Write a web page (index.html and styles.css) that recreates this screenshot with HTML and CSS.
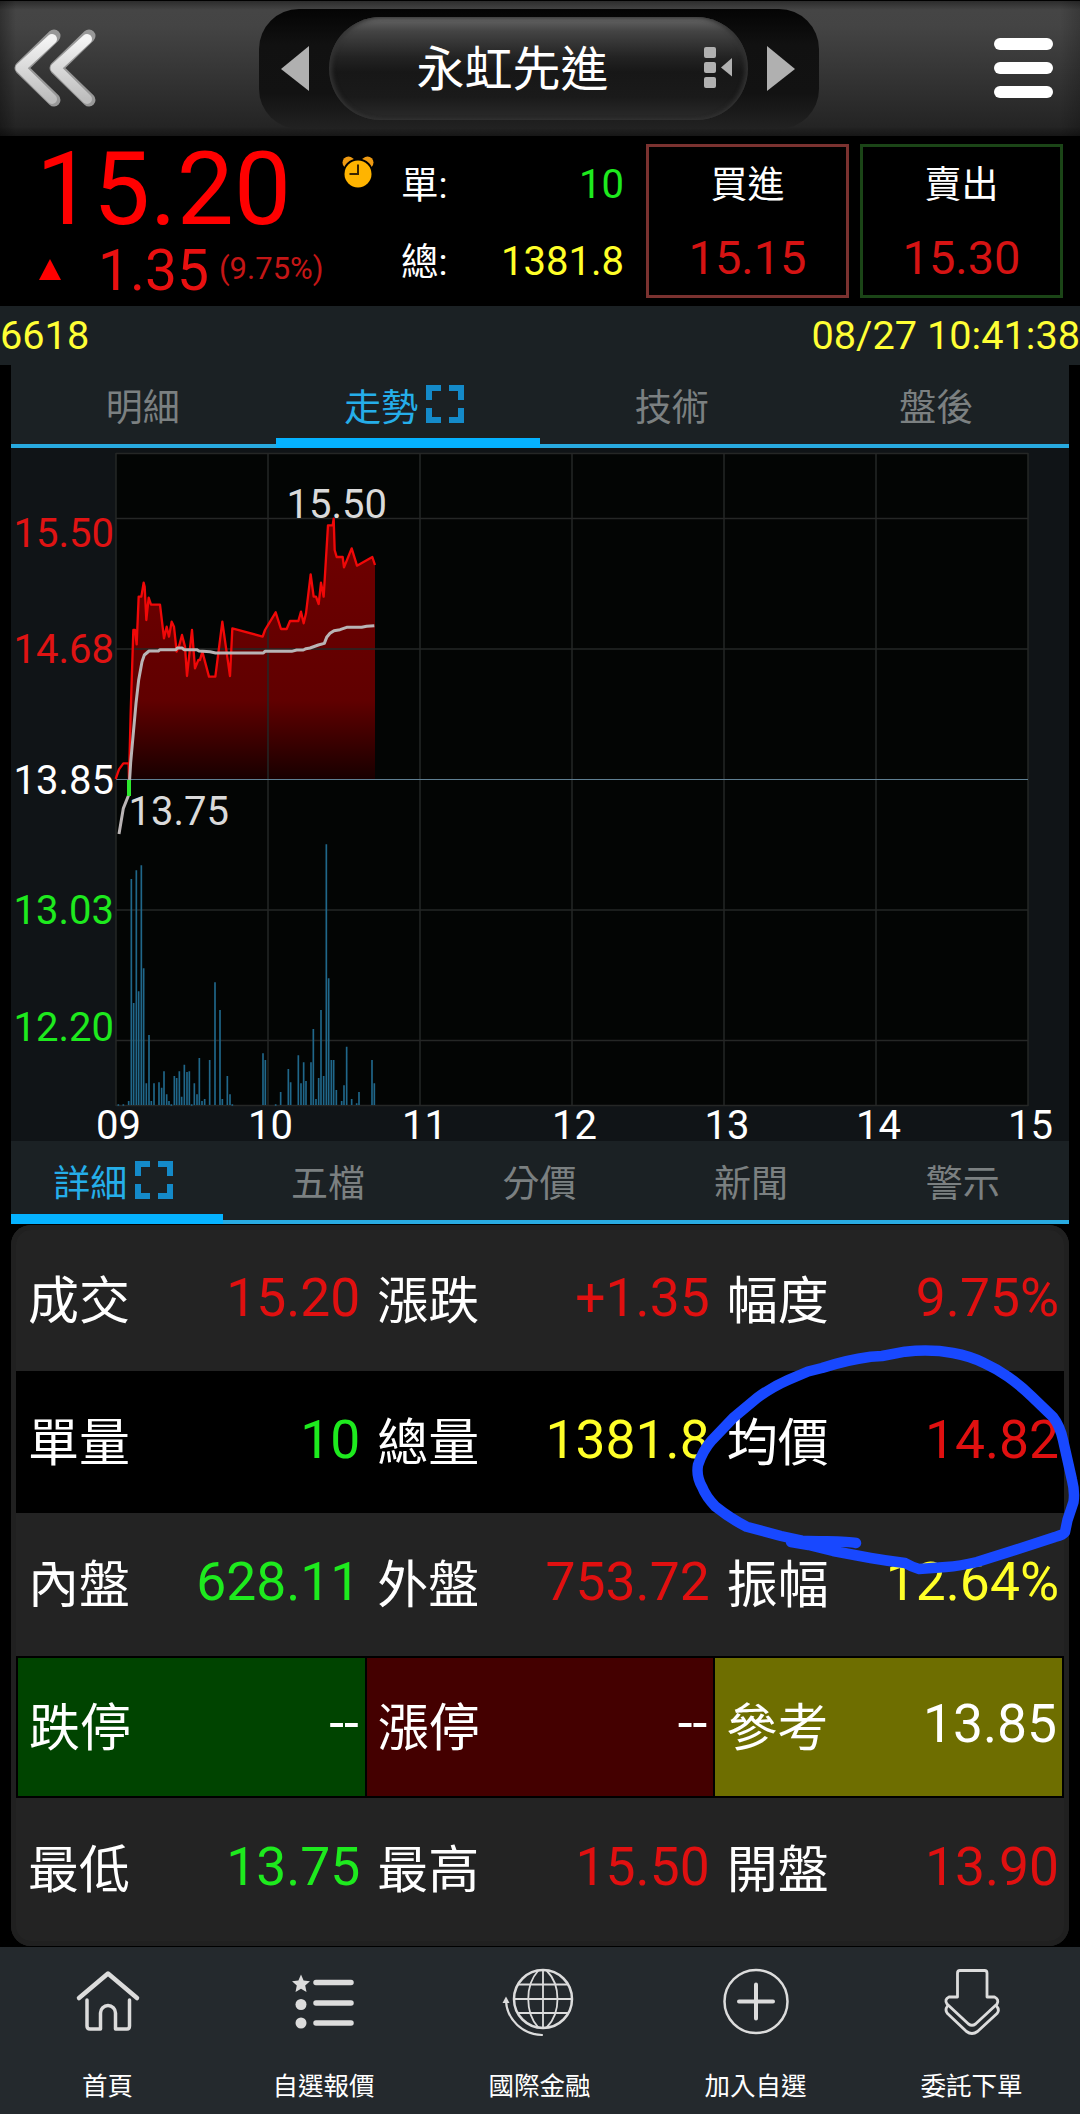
FILE: index.html
```html
<!DOCTYPE html>
<html lang="zh-Hant">
<head>
<meta charset="utf-8">
<title>永虹先進 6618</title>
<link rel="stylesheet" href="styles.css">
</head>
<body>
<div class="app">
  <header class="topbar">
    <svg class="back" width="96" height="90" viewBox="0 0 96 90">
      <defs><linearGradient id="chev" x1="0" y1="0" x2="0" y2="1"><stop offset="0" stop-color="#f4f4f4"/><stop offset="1" stop-color="#bdbdbd"/></linearGradient></defs>
      <g fill="none" stroke-linecap="round" stroke-linejoin="round">
        <path d="M54 14 21 46 54 78M89 14 56 46 89 78" stroke="#989898" stroke-width="13"/>
        <path d="M52 17 20.500 46 52 77M87 17 55.500 46 87 77" stroke="url(#chev)" stroke-width="10"/>
      </g>
    </svg>
    <div class="switcher">
      <svg width="30" height="46" viewBox="0 0 30 46"><path d="M1 23 29 0V45Z" fill="#b0b0b0"/></svg>
      <div class="symbol">
        <span class="symbol-name">永虹先進</span>
        <svg class="symbol-list" width="30" height="42" viewBox="0 0 30 42" fill="#b0b0b0"><rect width="12" height="11" rx="2"/><rect y="15" width="12" height="11" rx="2"/><rect y="30" width="12" height="11" rx="2"/><path d="M17 20.500 28 11V29.500Z"/></svg>
      </div>
      <svg width="30" height="46" viewBox="0 0 30 46"><path d="M29 23 1 0V45Z" fill="#b0b0b0"/></svg>
    </div>
    <div class="menu"><i></i><i></i><i></i></div>
  </header>

  <section class="quote">
    <div class="price">
      <div class="last">15.20</div>
      <div class="change">
        <svg width="22" height="21" viewBox="0 0 22 21"><path d="M11 0 22 21H0Z" fill="#f00"/></svg>
        <span class="diff">1.35</span><span class="pct">(9.75%)</span>
      </div>
    </div>
    <svg class="alarm" width="32" height="33" viewBox="0 0 32 33">
      <circle cx="6.500" cy="6.500" r="6" fill="#ee9a12"/><circle cx="25.500" cy="6.500" r="6" fill="#ee9a12"/>
      <circle cx="16" cy="18" r="15.500" fill="#000"/><circle cx="16" cy="18" r="13.500" fill="#ffb400"/>
      <path d="M16 8.500V18H7.500" fill="none" stroke="#3a2400" stroke-width="2"/>
    </svg>
    <div class="volumes">
      <div><span>單:</span><b class="green">10</b></div>
      <div><span>總:</span><b class="yellow">1381.8</b></div>
    </div>
    <div class="box buy"><span>買進</span><b>15.15</b></div>
    <div class="box sell"><span>賣出</span><b>15.30</b></div>
  </section>

  <div class="stamp"><span>6618</span><span>08/27 10:41:38</span></div>

  <main class="content">
    <nav class="tabs four">
      <div class="tab">明細</div>
      <div class="tab active">走勢<svg class="expand" width="38" height="38" viewBox="0 0 38 38"><path d="M3 15V3H15M23 3H35V15M35 23V35H23M15 35H3V23"/></svg></div>
      <div class="tab">技術</div>
      <div class="tab">盤後</div>
    </nav>

    <svg class="chart" width="1058" height="693" viewBox="11 448 1058 693">
      <defs><linearGradient id="area" gradientUnits="userSpaceOnUse" x1="0" y1="116" x2="0" y2="897">
        <stop offset="0" stop-color="#700000"/><stop offset=".7" stop-color="#600000"/><stop offset="1" stop-color="#180000"/>
      </linearGradient></defs>
      <rect x="116" y="453" width="912" height="653" fill="#030504"/>
      <g transform="translate(100 480) scale(.33333)">
        <path fill="url(#area)" d="M92 897 92 700 100 450 105 450 110 493 116 350 124 350 131 308 139 420 146 353 153 374 180 374 192 475 200 440 207 470 215 425 222 440 230 515 246 465 255 500 261 588 276 450 285 565 295 540 307 515 327 590 346 590 367 425 390 588 397 445 488 470 495 450 527 397 543 447 560 447 570 423 595 423 603 395 611 430 618 400 632 283 641 350 648 350 656 372 663 308 671 350 684 136 698 136 701 116 704 210 710 231 728 231 732 262 755 205 771 257 817 231 825 255V897Z"/>
      </g>
      <path class="grid" d="M116 453.500H1028M116 518.500H1028M116 649H1028M116 910H1028M116 1040.500H1028M116 1105.500H1028M116 453V1106M268 453V1106M420 453V1106M572 453V1106M724 453V1106M876 453V1106M1028 453V1106"/>
      <path d="M116 779.500H1028" stroke="#5f7f92"/>
      <g transform="translate(100 820) scale(.33333)">
        <path class="bars" d="M55 857v-4M70 857v-4M86 855V843M94 855V177M101 855V549M109 855V151M116 855V514M124 855V136M131 855V445M139 855V790M147 855V645M154 855V843M162 855V790M177 855V787M185 855V803M192 855V754M200 855V823M207 855V843M214 857v-4M223 855V768M230 855V774M238 855V754M245 855V830M253 855V734M261 855V756M268 855V754M275 857v-4M283 855V790M291 855V823M298 855V714M306 855V843M314 855V837M329 855V720M345 855V487M360 855V570M367 855V837M382 855V768M390 855V823M397 857v-4M489 855V700M496 855V720M527 857v-4M542 855V816M565 855V747M572 855V787M595 855V706M603 855V790M611 855V727M618 855V783M633 855V727M640 855V627M648 855V837M656 855V774M663 855V570M671 855V768M679 855V73M686 855V475M694 855V720M701 855V720M709 855V810M725 855V843M732 855V796M740 855V680M755 855V837M770 855v-5M777 855V816M816 855V720M823 855V790"/>
      </g>
      <g transform="translate(100 480) scale(.33333)" fill="none" stroke-linejoin="round">
        <path stroke="#f00808" stroke-width="7" d="M47 897 57 868 70 850 86 850 87 897 92 700 100 450 105 450 110 493 116 350 124 350 131 308 134 320 139 420 146 353 153 374 180 374 192 475 200 440 207 470 215 425 222 440 230 515 238 495 246 465 255 500 261 588 276 450 285 565 295 540 300 540 307 515 327 590 346 590 367 425 390 588 397 445 488 470 495 450 527 397 543 447 560 447 570 423 595 423 603 395 611 430 618 400 632 283 641 350 648 350 656 372 663 308 671 350 684 136 698 136 701 116 704 210 710 231 728 231 732 262 755 205 771 257 817 231 825 255"/>
        <path stroke="#b9b4b5" stroke-width="9" d="M57 1062 70 985 86 945 92 848 108 670 116 600 126 545 133 525 147 513 175 513 180 509 228 509 232 504 246 504 252 509 290 509 297 513 330 515 347 519 490 519 495 514 575 514 590 510 610 510 618 506 630 504 655 495 673 490 680 472 690 460 702 452 720 449 740 442 785 442 800 439 823 437"/>
        <path stroke="#2ee82e" stroke-width="12" d="M87 900V948"/>
      </g>
      <g class="axis-y">
        <text x="13.500" y="547" fill="#e01313">15.50</text>
        <text x="13.500" y="663" fill="#e01313">14.68</text>
        <text x="13.500" y="794" fill="#fff">13.85</text>
        <text x="13.500" y="923.500" fill="#1eea1e">13.03</text>
        <text x="13.500" y="1040.500" fill="#1eea1e">12.20</text>
        <text x="286.500" y="518" fill="#dadada">15.50</text>
        <text x="128.500" y="825" fill="#dadada">13.75</text>
      </g>
      <g class="axis-x">
        <text x="118.500" y="1139">09</text><text x="270.500" y="1139">10</text><text x="424.500" y="1139">11</text>
        <text x="574.500" y="1139">12</text><text x="727" y="1139">13</text><text x="878.500" y="1139">14</text><text x="1030.500" y="1139">15</text>
      </g>
    </svg>

    <nav class="tabs five">
      <div class="tab active">詳細<svg class="expand" width="38" height="38" viewBox="0 0 38 38"><path d="M3 15V3H15M23 3H35V15M35 23V35H23M15 35H3V23"/></svg></div>
      <div class="tab">五檔</div>
      <div class="tab">分價</div>
      <div class="tab">新聞</div>
      <div class="tab">警示</div>
    </nav>

    <section class="card">
      <div class="row"><div class="cell"><span>成交</span><b class="red">15.20</b></div><div class="cell"><span>漲跌</span><b class="red">+1.35</b></div><div class="cell"><span>幅度</span><b class="red">9.75%</b></div></div>
      <div class="row dark"><div class="cell"><span>單量</span><b class="green">10</b></div><div class="cell"><span>總量</span><b class="yellow">1381.8</b></div><div class="cell"><span>均價</span><b class="red">14.82</b></div></div>
      <div class="row"><div class="cell"><span>內盤</span><b class="green">628.11</b></div><div class="cell"><span>外盤</span><b class="red">753.72</b></div><div class="cell"><span>振幅</span><b class="yellow">12.64%</b></div></div>
      <div class="row limits"><div class="cell down"><span>跌停</span><b class="none">--</b></div><div class="cell up"><span>漲停</span><b class="none">--</b></div><div class="cell ref"><span>參考</span><b>13.85</b></div></div>
      <div class="row"><div class="cell"><span>最低</span><b class="green">13.75</b></div><div class="cell"><span>最高</span><b class="red">15.50</b></div><div class="cell"><span>開盤</span><b class="red">13.90</b></div></div>
    </section>
  </main>

  <nav class="bottom">
    <div class="item">
      <svg width="80" height="70" viewBox="68 1967 80 70"><path d="M79 1998 108 1973.500 137 1998" stroke-width="4.500"/><path stroke-width="3.500" d="M87 2000V2026Q87 2029 90 2029H100.500V2013A7.500 7.500 0 0 1 115.500 2013V2029H127Q129.500 2029 129.500 2026V2000"/></svg>
      <span>首頁</span>
    </div>
    <div class="item">
      <svg width="80" height="70" viewBox="284 1967 80 70"><path d="M316 1982.500H351M316 2003H351M316 2023H351" stroke-width="5.500"/><g class="solid"><path d="M301 1974.500 303.600 1980.600 310 1981.300 305.200 1985.600 306.500 1992 301 1988.800 295.500 1992 296.800 1985.600 292 1981.300 298.400 1980.600Z"/><circle cx="301" cy="2004.500" r="5.500"/><circle cx="301" cy="2023" r="5.500"/></g></svg>
      <span>自選報價</span>
    </div>
    <div class="item">
      <svg width="80" height="70" viewBox="500 1967 80 70"><circle cx="543" cy="1999" r="29" stroke-width="2.500"/><path stroke-width="1.800" d="M543 1970V2028M514 1999H572M518 1984.500H568M518 2013H568M538 1971C525 1985 525 2013 538 2027M547 1971C561 1985 561 2013 547 2027"/><path stroke-width="2.200" d="M506 2001C507 2020 523 2034.500 542 2035"/><path class="solid" d="M506 1996.500 509.500 2003H502.500Z"/></svg>
      <span>國際金融</span>
    </div>
    <div class="item">
      <svg width="80" height="70" viewBox="716 1967 80 70"><circle cx="756" cy="2001.500" r="31.500" stroke-width="2.500"/><path stroke-width="4" d="M756 1984.500V2018.500M739 2001.500H773"/></svg>
      <span>加入自選</span>
    </div>
    <div class="item">
      <svg width="80" height="70" viewBox="932 1967 80 70" stroke-width="2.800"><path d="M957.500 1997V1973Q957.500 1970.500 960 1970.500H984.500Q987 1970.500 987 1973V1997H994.500Q999.500 1999.500 997 2004L975.500 2024Q972 2026.500 968.500 2024L947 2004Q944 1999.500 949 1997Z"/><path d="M947.500 2006Q944.500 2010 947.500 2013.500L966.500 2031.500Q972 2035.500 977.500 2031.500L997 2013.500Q1000 2010 996.500 2006"/></svg>
      <span>委託下單</span>
    </div>
  </nav>

  <svg class="ink" width="400" height="240" viewBox="680 1340 400 240">
    <path d="M856 1543C846 1541 829 1541.700 802 1540.700L781 1536 746.600 1526.700Q731 1519 715.600 1506.700 706 1497 702 1486.700 696 1476 698 1465 703 1450 712 1440L733 1418 757 1398Q772 1387 788 1380L808 1371.500 822 1368Q846 1360 870.600 1356.700L882 1356 905 1351.700Q931 1349 953 1353 970 1356 984 1363 997 1369 1008 1376.700 1021 1386 1032 1396.700L1053 1417Q1060 1426 1063 1440L1072 1480Q1075 1492 1073.500 1502L1067.500 1520 1065 1532Q1063 1535 1055 1537L1015 1550 977 1562Q960 1566 946 1567L919 1569Q912 1567 905 1563 888 1561 870.600 1558L833 1551 808.600 1545 791 1542"/>
  </svg>
</div>
</body>
</html>
```
FILE: styles.css
```css
* { box-sizing: border-box; }
body { margin: 0; background: #000; }
b { font-weight: 400; }
svg { display: block; flex: none; }

.app {
  position: relative;
  width: 1080px;
  height: 2114px;
  overflow: hidden;
  background: #000;
  color: #fff;
  font-family: Roboto, "Noto Sans CJK TC", sans-serif;
  line-height: 1;
}

.red { color: #e01010; }
.green { color: #1eea1e; }
.yellow { color: #ffff28; }

.topbar {
  display: flex;
  align-items: center;
  height: 136px;
  padding-right: 27px;
  border-top: 1px solid #000;
  background:
    linear-gradient(90deg, rgba(0, 0, 0, .3), transparent 16px, transparent 1060px, rgba(0, 0, 0, .18)),
    linear-gradient(#2c2c2c 0, #454545 9px, #444 25px, #242424 126px, #202020 128px, #161616 135px);
}
.back { margin: 0 0 24px; align-self: flex-end; }
.switcher {
  display: flex;
  align-items: center;
  justify-content: space-between;
  width: 560px;
  height: 120px;
  margin-left: 163px;
  padding: 0 23px 0 21px;
  border-radius: 40px;
  background: linear-gradient(#040404, #111 30%, #121212 70%, #222);
}
.symbol {
  display: flex;
  align-items: center;
  width: 419px;
  height: 103px;
  padding-left: 88px;
  border-radius: 52px;
  background: linear-gradient(#686868 0, #444 14px, #232323 40px, #171717 55px, #1a1a1a 80px, #2b2b2b 100%);
  box-shadow: inset 3px 0 4px #333, inset -3px 0 4px #333;
}
.symbol-name { width: 287px; padding-top: 2px; font-size: 48px; }
.symbol-list { margin-bottom: 2px; }
.menu { display: flex; flex-direction: column; gap: 12px; margin: 0 0 1px auto; }
.menu i { width: 59px; height: 12px; border-radius: 6px; background: #fff; }

.quote { display: flex; height: 170px; }
.price { width: 340px; color: #f00; }
.last { padding: 4px 0 0 36px; font-size: 101.500px; line-height: 100px; }
.change { display: flex; align-items: center; padding-left: 39px; }
.diff { width: 158px; padding: 2px 0 0 37px; font-size: 57px; line-height: 57px; color: #e91010; }
.pct { padding-bottom: 3px; font-size: 31px; color: #c41616; }
.alarm { margin: 20px 0 0 2px; }
.volumes { width: 272px; padding: 10px 22px 0 27px; font-size: 40px; }
.volumes div { display: flex; align-items: center; justify-content: space-between; height: 77px; }
.volumes span { font-size: 37.500px; padding-top: 2px; }
.box {
  display: flex;
  flex-direction: column;
  align-items: center;
  width: 203px;
  height: 154px;
  margin: 8px 11px 0 0;
  padding-top: 20px;
  border: 3px solid #7b3230;
}
.box.sell { border-color: #1b4517; margin-right: 0; }
.box span { font-size: 37px; line-height: 37px; }
.box b { margin-top: 30px; font-size: 47px; line-height: 48px; color: #d51313; }

.stamp {
  display: flex;
  justify-content: space-between;
  height: 59px;
  padding-top: 10px;
  background: #1b2124;
  color: #ffff35;
  font-size: 39.700px;
  line-height: 40px;
}

.content { height: 1582px; padding: 0 11px; }
.tabs {
  display: grid;
  height: 83px;
  border-bottom: 4px solid #28aae0;
  background: #1b2124;
  color: #7b8081;
  font-size: 37px;
}
.four { grid-template-columns: repeat(4, 1fr); }
.five { grid-template-columns: repeat(5, 1fr); }
.tab { display: flex; align-items: center; justify-content: center; height: 83px; padding: 3px 1px 0 0; }
.tab.active { gap: 8px; padding: 13px 7px 0 0; border-bottom: 10px solid #05b2ff; color: #25aee9; }
.expand { margin-bottom: 8px; fill: none; stroke: #148ac9; stroke-width: 6; }

.chart { overflow: visible; background: #101417; }
.grid { fill: none; stroke: #252726; stroke-width: 1.5; }
.bars { fill: none; stroke: #20678a; stroke-width: 5; }
.axis-y text { font-size: 40px; }
.axis-x text { font-size: 40px; fill: #fff; text-anchor: middle; }

.card {
  height: 721px;
  margin-top: 1px;
  padding: 4px 5px 6px;
  border-radius: 20px;
  background: #232323;
  box-shadow: inset 0 0 0 5px #202020;
}
.row { display: grid; grid-template-columns: repeat(3, 1fr); height: 142.200px; }
.cell { display: flex; align-items: center; justify-content: space-between; padding: 0 5px 0 12px; }
.cell span { padding-top: 3px; font-size: 51px; }
.cell b { padding-bottom: 5px; font-size: 53.400px; }
.dark { background: #000; }
.limits { gap: 2px; padding: 2px; background: #000; }
.limits .cell { padding: 0 5px 0 11px; }
.limits .none { padding: 0 1px 8px 0; }
.down { background: #004400; }
.up { background: #440000; }
.ref { background: #6e6e00; }

.bottom { display: grid; grid-template-columns: repeat(5, 216px); height: 167px; background: #24292d; }
.item { display: flex; flex-direction: column; align-items: center; padding-top: 20px; }
.item svg { fill: none; stroke: #dcdcdc; stroke-linecap: round; stroke-linejoin: round; }
.item .solid { fill: #dcdcdc; stroke: none; }
.item span { margin: 36px 1px 0 0; font-size: 25.500px; line-height: 26px; }

/* Freehand marker stroke drawn over the table */
.ink { position: absolute; left: 680px; top: 1340px; fill: none; stroke: #1848ff; stroke-width: 10.5; stroke-linecap: round; stroke-linejoin: round; }
```
